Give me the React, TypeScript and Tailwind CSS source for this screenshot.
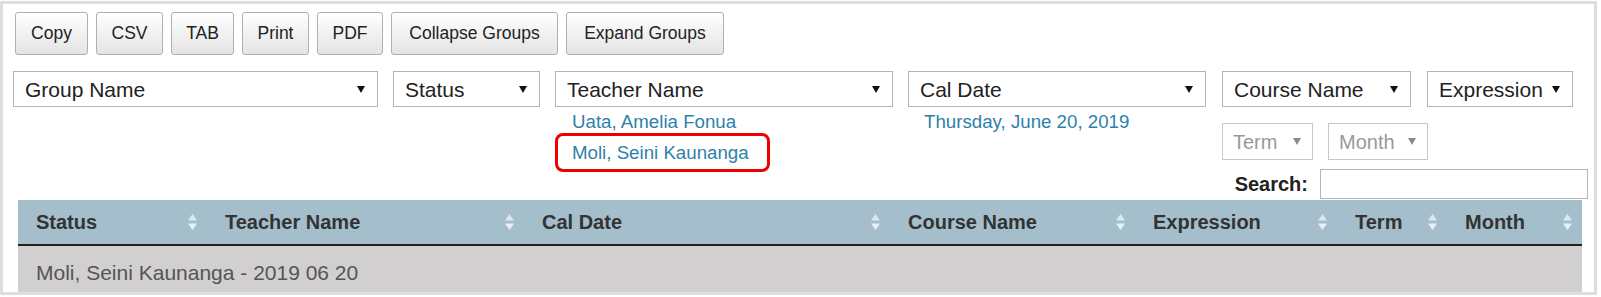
import React from "react";

const font = { fontFamily: '"Liberation Sans", Arial, sans-serif' };

const buttons = [
  { label: "Copy", w: "w-[73px]" },
  { label: "CSV", w: "w-[67px]" },
  { label: "TAB", w: "w-[63px]" },
  { label: "Print", w: "w-[67px]" },
  { label: "PDF", w: "w-[66px]" },
  { label: "Collapse Groups", w: "w-[167px]" },
  { label: "Expand Groups", w: "w-[158px]" },
];

// header columns of the grouped table
const columns = [
  { name: "Status", w: "w-[189px]" },
  { name: "Teacher Name", w: "w-[317px]" },
  { name: "Cal Date", w: "w-[366px]" },
  { name: "Course Name", w: "w-[245px]" },
  { name: "Expression", w: "w-[202px]" },
  { name: "Term", w: "w-[110px]" },
  { name: "Month", w: "w-[135px]" },
];

function Arrow({ muted }: { muted?: boolean }) {
  return (
    <svg width="8" height="7" viewBox="0 0 8 7" className="shrink-0">
      <path d="M0 0 L8 0 L4 7 Z" fill={muted ? "#8a8a8a" : "#111"} />
    </svg>
  );
}

function Select({ label, w, muted }: { label: string; w: string; muted?: boolean }) {
  return (
    <div
      className={`${w} flex items-center justify-between bg-white ${
        muted
          ? "h-[37px] border border-[#c8c8c8] pl-[10px] pr-[11px] text-[20px] text-[#999]"
          : "h-[36px] border border-[#b4b4b4] pl-[11px] pr-[12px] text-[21px] text-[#222]"
      }`}
    >
      <span className="leading-none">{label}</span>
      <Arrow muted={muted} />
    </div>
  );
}

function SortIcon() {
  return (
    <svg width="11" height="18" viewBox="0 0 11 18" className="shrink-0">
      <path d="M1 7.5 L10 7.5 L5.5 1 Z" fill="#dfe8ec" />
      <path d="M1 10.5 L10 10.5 L5.5 17 Z" fill="#e9eff2" />
    </svg>
  );
}

export default function App() {
  return (
    <div className="bg-white w-[1601px] h-[297px] pt-[1px]" style={font}>
      <div className="w-[1597px] h-[294px] border-[3px] border-[#dedede] bg-white overflow-hidden pl-[12px] pt-[8px]">
        {/* export buttons */}
        <div className="flex gap-[8px]">
          {buttons.map((b) => (
            <div
              key={b.label}
              className={`${b.w} h-[43px] flex items-center justify-center rounded-[3px] border border-[#b0b0b0] bg-gradient-to-b from-white to-[#e4e4e4] text-[17.5px] text-[#222]`}
            >
              {b.label}
            </div>
          ))}
        </div>

        {/* column filters */}
        <div className="flex items-start gap-[15px] mt-[16px] ml-[-2px]">
          <Select label="Group Name" w="w-[365px]" />
          <Select label="Status" w="w-[147px]" />
          <div className="relative flex flex-col">
            <Select label="Teacher Name" w="w-[338px]" />
            <div className="h-[30px] flex items-center pl-[17px] text-[18.7px] text-[#2f7fab]">
              Uata, Amelia Fonua
            </div>
            <div className="h-[30px] flex items-center pl-[17px] pt-[2px] text-[18.7px] text-[#2f7fab]">
              Moli, Seini Kaunanga
            </div>
            {/* red highlight annotation */}
            <div className="absolute left-0 top-[62px] w-[215px] h-[39px] rounded-[8px] border-[3px] border-[#ee0000]" />
          </div>
          <div className="flex flex-col">
            <Select label="Cal Date" w="w-[298px]" />
            <div className="h-[30px] flex items-center pl-[16px] text-[18.7px] text-[#2f7fab]">
              Thursday, June 20, 2019
            </div>
          </div>
          <div className="flex flex-col ml-[1px]">
            <div className="flex gap-[16px]">
              <Select label="Course Name" w="w-[189px]" />
              <Select label="Expression" w="w-[146px]" />
            </div>
            <div className="flex gap-[15px] mt-[16px]">
              <Select label="Term" w="w-[91px]" muted />
              <Select label="Month" w="w-[100px]" muted />
            </div>
          </div>
        </div>

        {/* search */}
        <div className="flex justify-end items-center gap-[12px] mt-[2px] pr-[6px]">
          <span className="text-[20px] font-bold text-[#222]">Search:</span>
          <div className="w-[268px] h-[30px] border border-[#b4b4b4] bg-white" />
        </div>

        {/* table */}
        <div className="ml-[3px] mt-[1px] w-[1564px]">
          <div className="flex h-[44px] bg-[#a4bfcb]">
            {columns.map((c) => (
              <div
                key={c.name}
                className={`${c.w} flex items-center justify-between pl-[18px] pr-[9px] text-[20px] font-bold text-[#333]`}
              >
                <span>{c.name}</span>
                <SortIcon />
              </div>
            ))}
          </div>
          <div className="h-[2px] bg-[#222]" />
          <div className="h-[46px] flex items-center pl-[18px] pt-[7px] bg-[#d1cfd0] text-[21px] text-[#555]">
            Moli, Seini Kaunanga - 2019 06 20
          </div>
        </div>
      </div>
    </div>
  );
}
